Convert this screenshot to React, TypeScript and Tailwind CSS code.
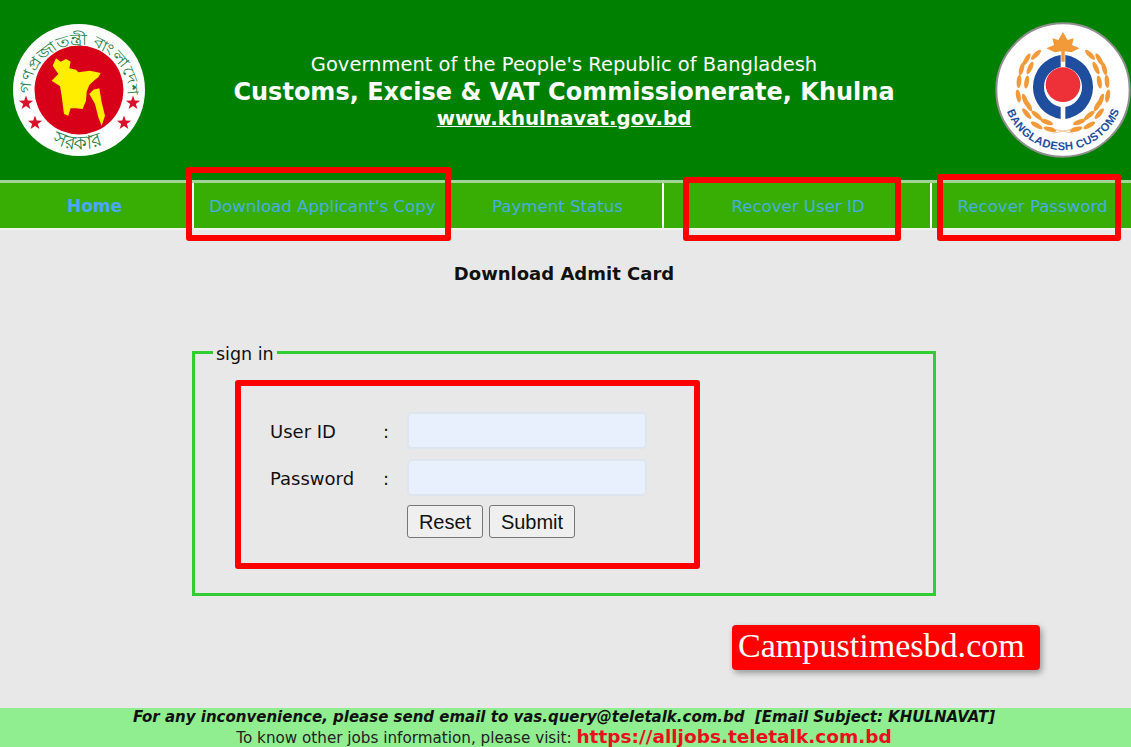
const dejavu = "font-['DejaVu_Sans',sans-serif]";

const navItems = [
  { label: "Home", width: "w-[194px]", bold: true },
  { label: "Download Applicant's Copy", width: "w-[257px]", bold: false },
  { label: "Payment Status", width: "w-[213px]", bold: false },
  { label: "Recover User ID", width: "w-[268px]", bold: false },
  { label: "Recover Password", width: "flex-1", bold: false },
];

function Star({ x, y }: { x: number; y: number }) {
  const pts = Array.from({ length: 10 }, (_, i) => {
    const r = i % 2 === 0 ? 7.5 : 3;
    const a = (Math.PI / 5) * i - Math.PI / 2;
    return `${x + r * Math.cos(a)},${y + r * Math.sin(a)}`;
  }).join(" ");
  return <polygon points={pts} fill="#d9112a" />;
}

function GovEmblem() {
  return (
    <svg width="132" height="132" viewBox="13 25 132 132" className="shrink-0">
      <circle cx="79" cy="91" r="66" fill="#ffffff" />
      <circle cx="79" cy="91" r="44.5" fill="#d70018" />
      <g transform="translate(40 50) scale(0.3333)" fill="#ffee00">
        <polygon points="48,28 62,38 78,30 92,38 88,58 108,62 115,70 150,65 182,72 175,85 165,92 148,108 140,128 138,155 128,180 108,178 92,178 85,200 72,195 65,140 60,112 35,95 55,75 38,50" />
        <polygon points="160,122 178,118 185,160 195,200 185,230 175,205 165,165 148,135" />
      </g>
      <Star x={26} y={104} />
      <Star x={133} y={104} />
      <Star x={35} y={124} />
      <Star x={124} y={124} />
      <defs>
        <path id="govTop" d="M 30 95 A 49 49 0 1 1 128 95" />
        <path id="govBottom" d="M 45 140 A 60 60 0 0 0 113 140" />
      </defs>
      <text fontSize="15" fill="#1d7f45" fontFamily="'Noto Sans', 'DejaVu Sans', sans-serif">
        <textPath href="#govTop" textLength="155" lengthAdjust="spacingAndGlyphs">গণপ্রজাতন্ত্রী বাংলাদেশ</textPath>
      </text>
      <text fontSize="19" fill="#1d7f45" fontFamily="'Noto Sans', 'DejaVu Sans', sans-serif">
        <textPath href="#govBottom" startOffset="8">সরকার</textPath>
      </text>
    </svg>
  );
}

function Laurel({ flip }: { flip?: boolean }) {
  const leaves = [
    [-81, -106, 45], [-109, -92, 30], [-99, -66, 25], [-124, -64, 15],
    [-109, -24, 10], [-132, -26, 5], [-134, 18, -10], [-114, 30, -20],
    [-104, 46, -30], [-109, 71, -40], [-79, 76, -50], [-49, 96, -70],
    [-79, 106, -60], [-39, 118, -75],
  ];
  return (
    <g transform={flip ? "scale(-1 1)" : undefined} fill="#f2993a">
      {leaves.map(([x, y, r]) => (
        <ellipse key={`${x}-${y}`} cx={x} cy={y} rx="7" ry="20" transform={`rotate(${r} ${x} ${y})`} />
      ))}
    </g>
  );
}

function CustomsEmblem() {
  return (
    <svg width="136" height="136" viewBox="-204 -204 408 408" className="shrink-0">
      <circle r="200" fill="#ffffff" stroke="#8f8f8f" strokeWidth="6" />
      <Laurel />
      <Laurel flip />
      <polygon
        fill="#f2993a"
        points="0,-174 14,-150 32,-155 27,-135 50,-125 25,-113 5,-116 5,-85 -5,-85 -5,-116 -25,-113 -50,-125 -27,-135 -32,-155 -14,-150"
      />
      <path d="M -7 -105 A 97 97 0 0 0 -7 87 L -7 51 A 61 61 0 0 1 -7 -69 Z" fill="#1f4e9e" />
      <path d="M 7 -105 A 97 97 0 0 1 7 87 L 7 51 A 61 61 0 0 0 7 -69 Z" fill="#1f4e9e" />
      <circle r="52" cy="-16" fill="#ee3038" />
      <path d="M -30 130 L 25 118 M 30 130 L -25 118" stroke="#f2c79a" strokeWidth="3" />
      <defs>
        <path id="customsArc" d="M -169 62 A 180 180 0 0 0 169 62" />
      </defs>
      <text fontSize="34" fontWeight="700" fill="#1f4e9e" fontFamily="'Liberation Sans', sans-serif">
        <textPath href="#customsArc" textLength="436" startOffset="2">BANGLADESH CUSTOMS</textPath>
      </text>
    </svg>
  );
}

function Field({ label }: { label: string }) {
  return (
    <div className="flex items-center h-[37px]">
      <span className="w-[113px] pt-[2px] text-[18px] text-[#111111]">{label}</span>
      <span className="w-[24px] pt-[2px] text-[18px] text-[#111111]">:</span>
      <input
        type="text"
        className="w-[240px] h-[37px] rounded-[5px] bg-[#e8f0fe] border-2 border-[#dde5ee]"
      />
    </div>
  );
}

export default function App() {
  return (
    <div className={`relative h-[747px] overflow-hidden bg-[#e8e8e8] flex flex-col ${dejavu}`}>
      <header className="h-[180px] bg-[#008000] flex items-center justify-between pl-[13px]">
        <GovEmblem />
        <div className="flex-1 flex flex-col items-center text-white pr-[12px] pt-[4px]">
          <p className="text-[19.5px] leading-[26px]">Government of the People's Republic of Bangladesh</p>
          <p className="text-[24px] leading-[28px] font-bold">Customs, Excise &amp; VAT Commissionerate, Khulna</p>
          <a className="text-[19.8px] leading-[26px] font-bold underline">www.khulnavat.gov.bd</a>
        </div>
        <CustomsEmblem />
      </header>

      <nav className="h-[50px] flex bg-[#38ad03] border-t-[3px] border-t-[#a3d694] border-b-2 border-b-[#f0f5ee]">
        {navItems.map((item, i) => (
          <a
            key={item.label}
            className={`${item.width} flex items-center justify-center pt-[3px] ${
              item.bold ? "pr-[3px] text-[17px] font-bold text-[#4aa8f8]" : "pl-[2px] text-[16.6px] text-[#47aee0]"
            } ${i < navItems.length - 1 ? "border-r-2 border-r-white" : ""}`}
          >
            {item.label}
          </a>
        ))}
      </nav>

      <main className="flex-1 flex flex-col">
        <h1 className="mt-[33px] text-center text-[18px] leading-[22px] font-bold text-[#111111] pr-[3px]">
          Download Admit Card
        </h1>
        <fieldset className="mt-[57px] ml-[192px] w-[744px] h-[254px] border-[3px] border-[#32cd32]">
          <legend className="relative top-[2px] ml-[18px] px-[3px] text-[17.5px] leading-[20px] text-[#111111]">sign in</legend>
          <div className="pl-[75px] pt-[50px]">
            <div className="flex flex-col gap-[10px]">
              <Field label="User ID" />
              <Field label="Password" />
            </div>
            <div className="mt-[9px] ml-[137px] flex gap-[6px] font-['Liberation_Sans',sans-serif] text-[20px] text-[#111111]">
              <button className="w-[76px] h-[33px] bg-[#efefef] border border-[#767676] rounded-[3px]">Reset</button>
              <button className="w-[86px] h-[33px] bg-[#efefef] border border-[#767676] rounded-[3px]">Submit</button>
            </div>
          </div>
        </fieldset>
      </main>

      <footer className="h-[39px] bg-[#90ee90] flex flex-col items-center overflow-hidden pr-[3px]">
        <p className="text-[15px] leading-[18px] font-bold italic text-[#111111] whitespace-pre">
          For any inconvenience, please send email to vas.query@teletalk.com.bd  [Email Subject: KHULNAVAT]
        </p>
        <p className="text-[15.2px] leading-[21px] text-[#222222]">
          To know other jobs information, please visit:{" "}
          <a className="text-[18.5px] font-bold text-[#e8101c]">https://alljobs.teletalk.com.bd</a>
        </p>
      </footer>

      {/* red annotation boxes drawn over the page */}
      <div className="absolute left-[186px] top-[167px] w-[265px] h-[74px] border-[6px] border-[#ff0000] rounded-[3px]" />
      <div className="absolute left-[683px] top-[177px] w-[218px] h-[64px] border-[6px] border-[#ff0000] rounded-[3px]" />
      <div className="absolute left-[937px] top-[174px] w-[184px] h-[67px] border-[6px] border-[#ff0000] rounded-[3px]" />
      <div className="absolute left-[235px] top-[380px] w-[465px] h-[189px] border-[6px] border-[#ff0000] rounded-[3px]" />

      <div className="absolute left-[732px] top-[625px] w-[308px] h-[45px] bg-[#ff0000] rounded-[4px] shadow-[2px_3px_6px_rgba(0,0,0,0.35)] flex items-center pl-[6px] pb-[3px] font-['Liberation_Serif',serif] text-[34.1px] text-white">
        Campustimesbd.com
      </div>
    </div>
  );
}
